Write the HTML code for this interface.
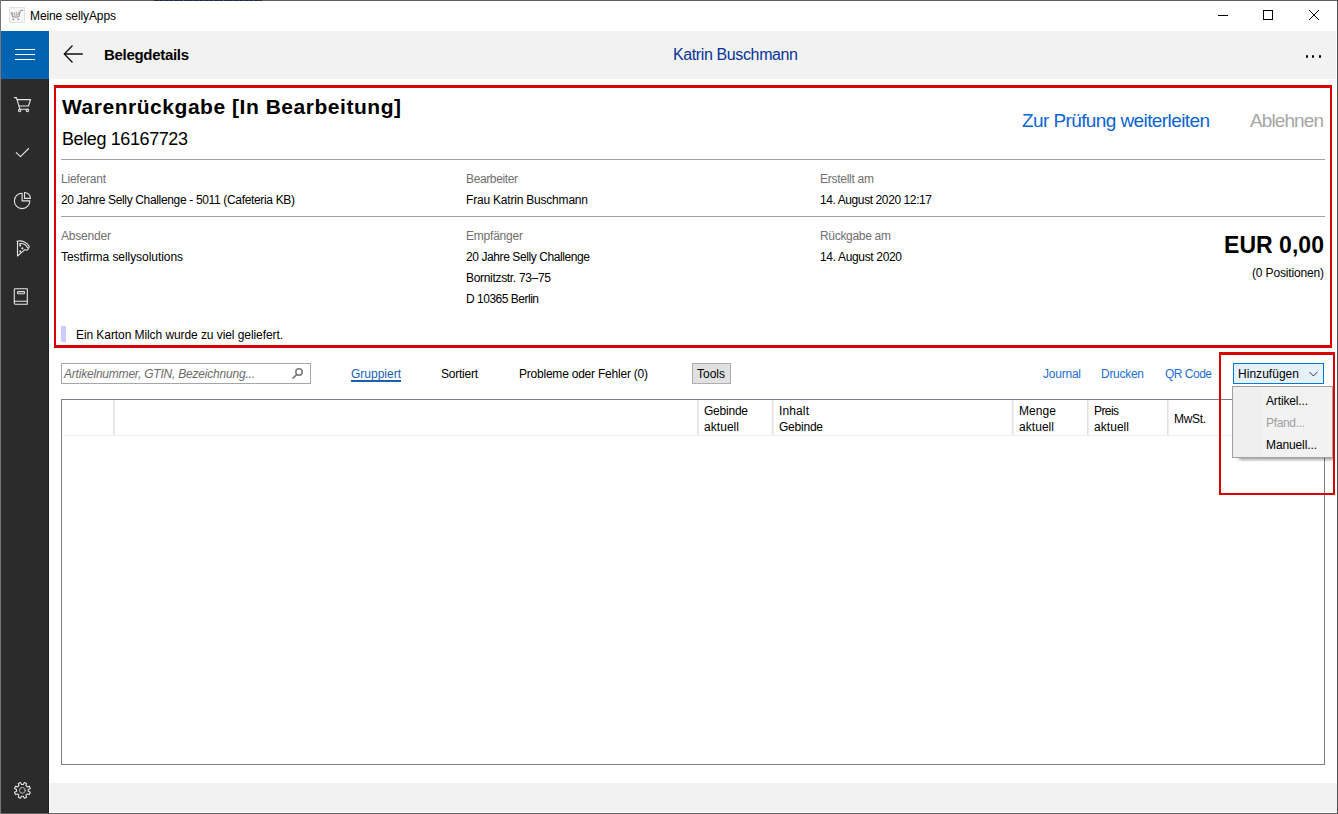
<!DOCTYPE html>
<html><head><meta charset="utf-8">
<style>
html,body{margin:0;padding:0;}
body{width:1338px;height:814px;position:relative;overflow:hidden;background:#fff;font-family:"Liberation Sans",sans-serif;}
.a{position:absolute;}
.t{position:absolute;white-space:nowrap;}
svg{position:absolute;overflow:visible;}
</style></head><body>
<!-- window border -->
<div class="a" style="left:0;top:0;width:1338px;height:1px;background:#5f5f5f"></div>
<div class="a" style="left:0;top:813px;width:1338px;height:1px;background:#5f5f5f"></div>
<div class="a" style="left:0;top:0;width:1px;height:814px;background:#777"></div>
<div class="a" style="left:1337px;top:0;width:1px;height:814px;background:#525252"></div>
<div class="a" style="left:154px;top:0;width:108px;height:1px;background:repeating-linear-gradient(90deg,#20284a 0 5px,#3a4060 5px 6px,#20284a 6px 9px,#5a5f70 9px 10px)"></div>
<!-- title bar icon -->
<div class="a" style="left:9px;top:7px;width:14px;height:14px;border:1px solid #e2e2e2;background:#f6f6f6"></div>
<svg style="left:0;top:0" width="40" height="30"><g fill="none" stroke="#8c8c8c" stroke-width="1">
<path d="M11.2 12.3 L12.8 17 H18.8 L20.2 11 Q20.6 10.4 21.3 10.4 H23"/>
<path d="M12.3 12.3 L13 15.5 M14.3 12.3 L14.8 15.8 M16.3 12.3 V15.8 M18.3 12.3 L17.8 15.8" stroke="#a8a8a8"/>
<path d="M12.5 19.4 H14.2 M17.5 19.4 H19.2" stroke-width="1.4"/></g></svg>
<!-- window controls -->
<div class="a" style="left:1218px;top:15px;width:10px;height:1px;background:#000"></div>
<div class="a" style="left:1263px;top:10px;width:8px;height:8px;border:1px solid #000"></div>
<svg style="left:0;top:0" width="1338" height="30"><path d="M1309 10 L1319 20 M1319 10 L1309 20" stroke="#000" stroke-width="1" fill="none"/></svg>
<!-- sidebar -->
<div class="a" style="left:1px;top:31px;width:48px;height:782px;background:#2b2b2b"></div>
<div class="a" style="left:48px;top:79px;width:1px;height:734px;background:#1f1f1f"></div>
<div class="a" style="left:1px;top:31px;width:48px;height:48px;background:#0063b1"></div>
<div class="a" style="left:15px;top:49px;width:20px;height:1px;background:#fff"></div>
<div class="a" style="left:15px;top:54px;width:20px;height:1px;background:#fff"></div>
<div class="a" style="left:15px;top:59px;width:20px;height:1px;background:#fff"></div>
<svg style="left:0;top:0" width="50" height="814"><g fill="none" stroke="#e6e6e6" stroke-width="1.1" stroke-linejoin="round" stroke-linecap="round">
<!-- cart -->
<path d="M14.3 97.6 H16.4 L19.9 109.2 H28.4"/>
<path d="M17.2 99.6 H30.6 L28.4 106 H19.2"/>
<circle cx="19.6" cy="110.6" r="1.2"/><circle cx="27.4" cy="110.6" r="1.2"/>
<!-- check -->
<path d="M16.3 152.6 L20.5 156.6 L28.6 148.5"/>
<!-- pie -->
<path d="M22.1 193.2 A7.7 7.7 0 1 0 29.8 200.9 H22.1 Z"/>
<path d="M24.5 192.5 V198.4 H30.4 A5.9 5.9 0 0 0 24.5 192.5 Z"/>
<!-- pizza -->
<path d="M17.5 241.5 V256 L24.9 249.6 Q27.6 251.2 28.6 248.2 L29.3 246.4 C26.8 241.8 21.5 240 17 241.3"/>
<path d="M19.2 243.8 C22.6 243 25.9 244.7 27.6 247.7"/>
<circle cx="20.2" cy="245.4" r="0.5"/><circle cx="22.4" cy="248.4" r="0.5"/><circle cx="20.2" cy="251.5" r="0.5"/>
<!-- book -->
<path d="M15.2 288.7 H27.3 V304.2 H15.2 Q14.3 304.2 14.3 303.3 V289.6 Q14.3 288.7 15.2 288.7 Z"/>
<path d="M14.3 301.3 H27.3"/>
<rect x="17.5" y="291.6" width="7" height="2.2" rx="0.8"/>
<!-- gear -->
<circle cx="22.4" cy="790.4" r="2.9" stroke="#c8c8c8" stroke-width="0.9"/>
</g>
<path fill="none" stroke="#e6e6e6" stroke-width="1.1" stroke-linejoin="round" d="M23.28 784.57 L24.35 782.54 L26.58 783.46 L25.91 785.65 L27.15 786.89 L29.34 786.22 L30.26 788.45 L28.23 789.52 L28.23 791.28 L30.26 792.35 L29.34 794.58 L27.15 793.91 L25.91 795.15 L26.58 797.34 L24.35 798.26 L23.28 796.23 L21.52 796.23 L20.45 798.26 L18.22 797.34 L18.89 795.15 L17.65 793.91 L15.46 794.58 L14.54 792.35 L16.57 791.28 L16.57 789.52 L14.54 788.45 L15.46 786.22 L17.65 786.89 L18.89 785.65 L18.22 783.46 L20.45 782.54 L21.52 784.57 Z"/>
</svg>
<!-- header bar -->
<div class="a" style="left:50px;top:31px;width:1286px;height:48px;background:#f2f2f2"></div>
<svg style="left:0;top:0" width="100" height="80"><path d="M72.5 45.5 L64.3 54 L72.5 62.5 M64.5 54 H82.8" fill="none" stroke="#111" stroke-width="1.3"/></svg>
<div class="a" style="left:1306px;top:55.4px;width:2.2px;height:2.2px;background:#000;border-radius:50%"></div>
<div class="a" style="left:1312.3px;top:55.4px;width:2.2px;height:2.2px;background:#000;border-radius:50%"></div>
<div class="a" style="left:1318.8px;top:55.4px;width:2.2px;height:2.2px;background:#000;border-radius:50%"></div>
<!-- separators -->
<div class="a" style="left:61px;top:159px;width:1264px;height:1px;background:#a0a0a0"></div>
<div class="a" style="left:61px;top:216px;width:1264px;height:1px;background:#a0a0a0"></div>
<!-- note bar -->
<div class="a" style="left:61px;top:326px;width:5px;height:16px;background:#ccccff"></div>
<!-- search box -->
<div class="a" style="left:61px;top:363px;width:248px;height:19px;border:1px solid #a6a6a6;background:#fff"></div>
<svg style="left:0;top:0" width="320" height="400"><g fill="none" stroke="#777" stroke-width="1.5"><circle cx="299" cy="372" r="3.2"/><path d="M296.6 374.6 L292.6 378.6"/></g></svg>
<!-- Gruppiert underline -->
<div class="a" style="left:351px;top:380px;width:50px;height:2px;background:#1a5fb4"></div>
<!-- Tools button -->
<div class="a" style="left:692px;top:363px;width:37px;height:19px;border:1px solid #adadad;background:#e1e1e1"></div>
<!-- Hinzufuegen -->
<div class="a" style="left:1233px;top:363px;width:89px;height:19px;border:1px solid #0078d7;background:#e5f1fb"></div>
<svg style="left:0;top:0" width="1338" height="400"><path d="M1309.5 372 L1313.4 376 L1317.3 372" fill="none" stroke="#333" stroke-width="1"/></svg>
<!-- table -->
<div class="a" style="left:61px;top:399px;width:1262px;height:364px;border:1px solid #7a808a;background:#fff"></div>
<div class="a" style="left:62px;top:435px;width:1262px;height:1px;background:#f0f0f0"></div>
<div class="a" style="left:113px;top:400px;width:1px;height:35px;background:#e2e2e2"></div><div class="a" style="left:114px;top:400px;width:1px;height:35px;background:#eeeeee"></div>
<div class="a" style="left:697px;top:400px;width:1px;height:35px;background:#e2e2e2"></div><div class="a" style="left:698px;top:400px;width:1px;height:35px;background:#eeeeee"></div>
<div class="a" style="left:772px;top:400px;width:1px;height:35px;background:#e2e2e2"></div><div class="a" style="left:773px;top:400px;width:1px;height:35px;background:#eeeeee"></div>
<div class="a" style="left:1012px;top:400px;width:1px;height:35px;background:#e2e2e2"></div><div class="a" style="left:1013px;top:400px;width:1px;height:35px;background:#eeeeee"></div>
<div class="a" style="left:1087px;top:400px;width:1px;height:35px;background:#e2e2e2"></div><div class="a" style="left:1088px;top:400px;width:1px;height:35px;background:#eeeeee"></div>
<div class="a" style="left:1167px;top:400px;width:1px;height:35px;background:#e2e2e2"></div><div class="a" style="left:1168px;top:400px;width:1px;height:35px;background:#eeeeee"></div>
<!-- menu -->
<div class="a" style="left:1236px;top:457px;width:98px;height:5px;background:linear-gradient(180deg,rgba(0,0,0,0.42),rgba(0,0,0,0.22) 50%,rgba(0,0,0,0));-webkit-mask:linear-gradient(90deg,transparent,#000 6px)"></div>
<div class="a" style="left:1232px;top:386px;width:99px;height:70px;border:1px solid #a0a0a0;background:#f2f2f2"></div>
<div class="a" style="left:1233px;top:387px;width:29px;height:70px;background:#efefef"></div>
<!-- bottom bar -->
<div class="a" style="left:50px;top:783px;width:1287px;height:29px;background:#f2f2f2"></div>
<!-- red annotation boxes -->
<div class="a" style="left:54px;top:85px;width:1274px;height:257px;border-style:solid;border-color:#da0000;border-width:3px 2px 3px 2px"></div>
<div class="a" style="left:1219px;top:352px;width:112px;height:138px;border-style:solid;border-color:#da0000;border-width:3px 2px 2px 2px"></div>
<div class="t" style="left:30.00px;top:8.84px;font-size:12px;line-height:14px;font-weight:400;color:#000;letter-spacing:-0.098px;">Meine sellyApps</div>
<div class="t" style="left:104.00px;top:45.80px;font-size:15px;line-height:18px;font-weight:700;color:#000;letter-spacing:-0.307px;">Belegdetails</div>
<div class="t" style="left:673.00px;top:44.96px;font-size:16px;line-height:19px;font-weight:400;color:#0a3499;letter-spacing:-0.382px;">Katrin Buschmann</div>
<div class="t" style="left:62.00px;top:94.22px;font-size:21px;line-height:25px;font-weight:700;color:#000;letter-spacing:0.531px;">Warenrückgabe [In Bearbeitung]</div>
<div class="t" style="left:62.00px;top:127.76px;font-size:18px;line-height:22px;font-weight:400;color:#000;letter-spacing:-0.394px;">Beleg 16167723</div>
<div class="t" style="left:1022.00px;top:108.92px;font-size:19px;line-height:23px;font-weight:400;color:#0a64d4;letter-spacing:-0.596px;">Zur Prüfung weiterleiten</div>
<div class="t" style="left:1250.00px;top:108.92px;font-size:19px;line-height:23px;font-weight:400;color:#a6a6a6;letter-spacing:-0.900px;">Ablehnen</div>
<div class="t" style="left:61.00px;top:171.84px;font-size:12px;line-height:14px;font-weight:400;color:#707070;letter-spacing:-0.213px;">Lieferant</div>
<div class="t" style="left:61.00px;top:192.84px;font-size:12px;line-height:14px;font-weight:400;color:#000;letter-spacing:-0.339px;">20 Jahre Selly Challenge - 5011 (Cafeteria KB)</div>
<div class="t" style="left:466.00px;top:171.84px;font-size:12px;line-height:14px;font-weight:400;color:#707070;letter-spacing:-0.375px;">Bearbeiter</div>
<div class="t" style="left:466.00px;top:192.84px;font-size:12px;line-height:14px;font-weight:400;color:#000;letter-spacing:-0.203px;">Frau Katrin Buschmann</div>
<div class="t" style="left:820.00px;top:171.84px;font-size:12px;line-height:14px;font-weight:400;color:#707070;letter-spacing:-0.269px;">Erstellt am</div>
<div class="t" style="left:820.00px;top:192.84px;font-size:12px;line-height:14px;font-weight:400;color:#000;letter-spacing:-0.405px;">14. August 2020 12:17</div>
<div class="t" style="left:61.00px;top:228.84px;font-size:12px;line-height:14px;font-weight:400;color:#707070;letter-spacing:-0.196px;">Absender</div>
<div class="t" style="left:61.00px;top:249.84px;font-size:12px;line-height:14px;font-weight:400;color:#000;letter-spacing:-0.060px;">Testfirma sellysolutions</div>
<div class="t" style="left:466.00px;top:228.84px;font-size:12px;line-height:14px;font-weight:400;color:#707070;letter-spacing:-0.213px;">Empfänger</div>
<div class="t" style="left:466.00px;top:249.84px;font-size:12px;line-height:14px;font-weight:400;color:#000;letter-spacing:-0.410px;">20 Jahre Selly Challenge</div>
<div class="t" style="left:466.00px;top:270.84px;font-size:12px;line-height:14px;font-weight:400;color:#000;letter-spacing:-0.316px;">Bornitzstr. 73–75</div>
<div class="t" style="left:466.00px;top:291.84px;font-size:12px;line-height:14px;font-weight:400;color:#000;letter-spacing:-0.492px;">D 10365 Berlin</div>
<div class="t" style="left:820.00px;top:228.84px;font-size:12px;line-height:14px;font-weight:400;color:#707070;letter-spacing:-0.305px;">Rückgabe am</div>
<div class="t" style="left:820.00px;top:249.84px;font-size:12px;line-height:14px;font-weight:400;color:#000;letter-spacing:-0.339px;">14. August 2020</div>
<div class="t" style="left:1224.00px;top:231.03px;font-size:23px;line-height:28px;font-weight:700;color:#000;letter-spacing:0.040px;">EUR 0,00</div>
<div class="t" style="left:1252.00px;top:265.84px;font-size:12px;line-height:14px;font-weight:400;color:#000;letter-spacing:-0.157px;">(0 Positionen)</div>
<div class="t" style="left:76.00px;top:327.84px;font-size:12px;line-height:14px;font-weight:400;color:#000;letter-spacing:-0.077px;">Ein Karton Milch wurde zu viel geliefert.</div>
<div class="t" style="left:64.00px;top:366.84px;font-size:12px;line-height:14px;font-weight:400;color:#6b6b6b;letter-spacing:-0.208px;font-style:italic;">Artikelnummer, GTIN, Bezeichnung...</div>
<div class="t" style="left:351.00px;top:366.84px;font-size:12px;line-height:14px;font-weight:400;color:#1a5fb4;letter-spacing:-0.004px;">Gruppiert</div>
<div class="t" style="left:441.00px;top:366.84px;font-size:12px;line-height:14px;font-weight:400;color:#000;letter-spacing:-0.241px;">Sortiert</div>
<div class="t" style="left:519.00px;top:366.84px;font-size:12px;line-height:14px;font-weight:400;color:#000;letter-spacing:-0.220px;">Probleme oder Fehler (0)</div>
<div class="t" style="left:697.00px;top:366.84px;font-size:12px;line-height:14px;font-weight:400;color:#000;letter-spacing:-0.004px;">Tools</div>
<div class="t" style="left:1043.00px;top:366.84px;font-size:12px;line-height:14px;font-weight:400;color:#1d6fd6;letter-spacing:-0.227px;">Journal</div>
<div class="t" style="left:1101.00px;top:366.84px;font-size:12px;line-height:14px;font-weight:400;color:#1d6fd6;letter-spacing:-0.281px;">Drucken</div>
<div class="t" style="left:1165.00px;top:366.84px;font-size:12px;line-height:14px;font-weight:400;color:#1d6fd6;letter-spacing:-0.505px;">QR Code</div>
<div class="t" style="left:1238.00px;top:366.84px;font-size:12px;line-height:14px;font-weight:400;color:#000;letter-spacing:0.031px;">Hinzufügen</div>
<div class="t" style="left:704.00px;top:403.84px;font-size:12px;line-height:14px;font-weight:400;color:#000;letter-spacing:-0.229px;">Gebinde</div>
<div class="t" style="left:704.00px;top:419.84px;font-size:12px;line-height:14px;font-weight:400;color:#000;letter-spacing:0.052px;">aktuell</div>
<div class="t" style="left:779.00px;top:403.84px;font-size:12px;line-height:14px;font-weight:400;color:#000;letter-spacing:0.128px;">Inhalt</div>
<div class="t" style="left:779.00px;top:419.84px;font-size:12px;line-height:14px;font-weight:400;color:#000;letter-spacing:-0.229px;">Gebinde</div>
<div class="t" style="left:1019.00px;top:403.84px;font-size:12px;line-height:14px;font-weight:400;color:#000;letter-spacing:0.074px;">Menge</div>
<div class="t" style="left:1019.00px;top:419.84px;font-size:12px;line-height:14px;font-weight:400;color:#000;letter-spacing:0.052px;">aktuell</div>
<div class="t" style="left:1094.00px;top:403.84px;font-size:12px;line-height:14px;font-weight:400;color:#000;letter-spacing:-0.586px;">Preis</div>
<div class="t" style="left:1094.00px;top:419.84px;font-size:12px;line-height:14px;font-weight:400;color:#000;letter-spacing:0.052px;">aktuell</div>
<div class="t" style="left:1174.00px;top:411.84px;font-size:12px;line-height:14px;font-weight:400;color:#000;letter-spacing:-0.336px;">MwSt.</div>
<div class="t" style="left:1266.00px;top:393.84px;font-size:12px;line-height:14px;font-weight:400;color:#000;letter-spacing:-0.149px;">Artikel...</div>
<div class="t" style="left:1266.00px;top:415.84px;font-size:12px;line-height:14px;font-weight:400;color:#a0a0a0;letter-spacing:-0.339px;">Pfand...</div>
<div class="t" style="left:1266.00px;top:437.84px;font-size:12px;line-height:14px;font-weight:400;color:#000;letter-spacing:-0.115px;">Manuell...</div>
</body></html>
